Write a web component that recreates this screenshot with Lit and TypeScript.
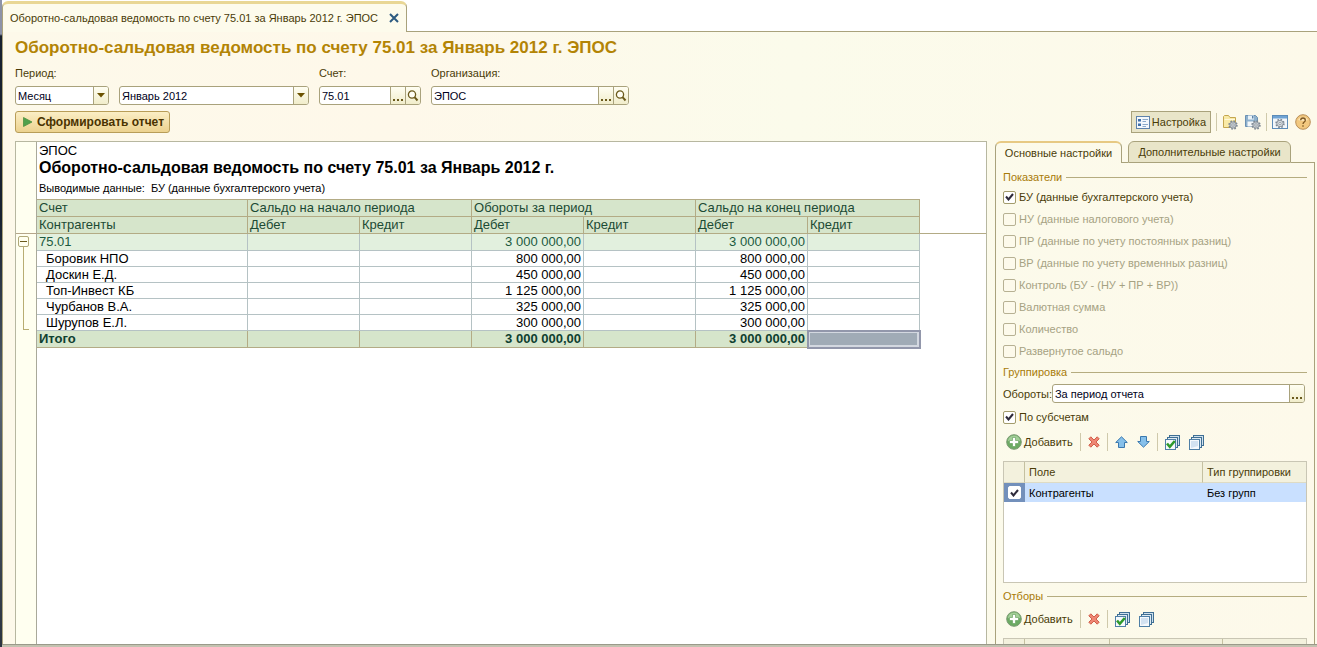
import { LitElement, html, css, svg, nothing } from "lit";
import { customElement } from "lit/decorators.js";
import { classMap } from "lit/directives/class-map.js";

interface Row {
  name: string;
  kind: "group" | "item" | "total";
  turnover: string;
  closing: string;
}

const ROWS: Row[] = [
  { name: "75.01", kind: "group", turnover: "3 000 000,00", closing: "3 000 000,00" },
  { name: "Боровик НПО", kind: "item", turnover: "800 000,00", closing: "800 000,00" },
  { name: "Доскин Е.Д.", kind: "item", turnover: "450 000,00", closing: "450 000,00" },
  { name: "Топ-Инвест КБ", kind: "item", turnover: "1 125 000,00", closing: "1 125 000,00" },
  { name: "Чурбанов В.А.", kind: "item", turnover: "325 000,00", closing: "325 000,00" },
  { name: "Шурупов Е.Л.", kind: "item", turnover: "300 000,00", closing: "300 000,00" },
  { name: "Итого", kind: "total", turnover: "3 000 000,00", closing: "3 000 000,00" },
];

const INDICATORS = [
  { label: "БУ (данные бухгалтерского учета)", on: true },
  { label: "НУ (данные налогового учета)", on: false },
  { label: "ПР (данные по учету постоянных разниц)", on: false },
  { label: "ВР (данные по учету временных разниц)", on: false },
  { label: "Контроль (БУ - (НУ + ПР + ВР))", on: false },
  { label: "Валютная сумма", on: false },
  { label: "Количество", on: false },
  { label: "Развернутое сальдо", on: false },
];

const icon = (body: unknown, w = 16, h = 16) =>
  html`<svg class="icon" width=${w} height=${h} viewBox="0 0 ${w} ${h}" aria-hidden="true">${body}</svg>`;

const gear = (x: number, y: number, fill = "#c3c9ce") => svg`
  <g transform="translate(${x} ${y})">
    <circle r="3.8" fill="none" stroke="#7d8893" stroke-width="1.8" stroke-dasharray="1.6 1.38"></circle>
    <circle r="3.2" fill=${fill} stroke="#7d8893" stroke-width=".8"></circle>
    <circle r="1.2" fill="#f6f7f4" stroke="#7d8893" stroke-width=".7"></circle>
  </g>`;

const closeIcon = icon(svg`<path d="M1 1 9 9M9 1 1 9" stroke="#2c5a80" stroke-width="2"></path>`, 10, 10);
const arrowIcon = icon(svg`<path d="M0 0H8L4 4.500Z" fill="#6b5200"></path>`, 8, 5);
const lensIcon = icon(svg`
  <circle cx="5" cy="4.500" r="3.600" fill="#fffef4" stroke="#6b5a1c" stroke-width="1.300"></circle>
  <path d="M7.500 7.200 10.500 10.500" stroke="#6b5a1c" stroke-width="2"></path>`, 12, 12);
const dotsIcon = icon(svg`<path d="M0 0H2V2H0ZM4 0H6V2H4ZM8 0H10V2H8Z" fill="#6b5a1c"></path>`, 10, 2);
const playIcon = icon(svg`<path d="M.5.5 9 5 .5 9.500Z" fill="#4fa04b" stroke="#4d8f3f" stroke-width=".8"></path>`, 10, 10);
const listIcon = icon(svg`
  <rect x=".5" y=".5" width="13" height="12" fill="#f4f8fc" stroke="#5e82ab"></rect>
  <path d="M2 3H5V5.500H2ZM2 7.500H5V10H2Z" fill="#3f6fa8"></path>
  <path d="M6.500 3.500H12M6.500 5.500H10M6.500 8.500H12M6.500 10.500H10" stroke="#7f9fc4" stroke-width=".9"></path>`, 14, 13);
const folderIcon = icon(svg`
  <path d="M1.500 13.500V2.500L2.500 1.500H6.500L8 3.500H13.500V13.500Z" fill="#f9eaa6" stroke="#c4a650"></path>
  <path d="M2.500 5.500H13" stroke="#fff9dc"></path>
  ${gear(11, 11)}`);
const diskIcon = icon(svg`
  <path d="M.5 1.500H10.500L12.500 3.500V12.500H.5Z" fill="#8fb1cd" stroke="#6a90b2"></path>
  <path d="M3 1.500H9V5.500H3Z" fill="#eaf2f8"></path><path d="M7 2H8.500V4.500H7Z" fill="#5b83a8"></path>
  <path d="M2.500 7.500H10.500V12.500H2.500Z" fill="#f4f8fa"></path>
  ${gear(11, 11)}`);
const windowIcon = icon(svg`
  <rect x=".5" y="1.500" width="15" height="13" fill="#f2f6fa" stroke="#5d8cb8"></rect>
  <path d="M1 2H15V4.500H1Z" fill="#6fa3d4"></path>
  ${gear(8, 9.5, "#d5dade")}`);
const helpIcon = icon(svg`
  <circle cx="8" cy="8" r="7.300" fill="#f2c87f" stroke="#b98f58"></circle>
  <path d="M3 6A5.500 5 0 0 1 13 6Q8 8 3 6Z" fill="#fbe3b4"></path>
  <path d="M5.700 6.300Q5.700 4 8 4T10.300 6.200Q10.300 7.300 9.200 8T8 10M8 11.200V12.800" fill="none" stroke="#7b5520" stroke-width="1.300"></path>`);
const addIcon = icon(svg`
  <circle cx="8" cy="8" r="7.300" fill="#6cab63" stroke="#7c9a74"></circle>
  <path d="M2 7A6 5.500 0 0 1 14 7Q8 9 2 7Z" fill="#a3cf98"></path>
  <path d="M6.500 3.500H9.500V6.500H12.500V9.500H9.500V12.500H6.500V9.500H3.500V6.500H6.500Z" fill="#fff" stroke="#5f9a58" stroke-width=".6"></path>`);
const deleteIcon = icon(svg`
  <path d="M.8 2.800 2.800.8 6 4 9.200.8 11.200 2.800 8 6 11.200 9.200 9.200 11.200 6 8 2.800 11.200.8 9.200 4 6Z" fill="#ee8673" stroke="#cc5340" stroke-width=".9"></path>`, 12, 12);
const upIcon = icon(svg`<path d="M6.500.8 12.300 6.500H9.500V11.500H3.500V6.500H.7Z" fill="#86c0ea" stroke="#3a78ae"></path>`, 13, 12);
const downIcon = icon(svg`<path d="M6.500 11.200 12.300 5.500H9.500V.5H3.500V5.500H.7Z" fill="#86c0ea" stroke="#3a78ae"></path>`, 13, 12);
const stack = svg`
  <rect x="4.500" y=".5" width="10" height="10" fill="#cfe0ec" stroke="#3f6f94"></rect>
  <rect x="2.500" y="2.500" width="10" height="10" fill="#dfeaf2" stroke="#3f6f94"></rect>
  <rect x=".5" y="4.500" width="10" height="10" fill="#f6f9fc" stroke="#4f7fa6"></rect>`;
const stackIcon = icon(svg`${stack}<path d="M2 6H9V11L2 13Z" fill="#d3e2f1"></path>`, 15, 15);
const stackCheckIcon = icon(svg`${stack}<path d="M2 8.500 4.800 11.800 9.800 6" fill="none" stroke="#2f9a2c" stroke-width="2.600"></path>`, 15, 15);

@customElement("app-root")
export class AppRoot extends LitElement {
  static styles = css`
    :host {
      display: block;
      height: 100vh;
      overflow: hidden;
      font: 11px/14px "Liberation Sans", Arial, sans-serif;
      color: #4a3c08;
    }
    * { box-sizing: border-box; }
    button, input, select { font: inherit; color: inherit; margin: 0; }
    button { padding: 0; border: 0; background: none; display: inline-flex; align-items: center; justify-content: center; }
    .icon { display: block; flex: none; }

    .frame {
      height: 100%;
      display: flex;
      flex-direction: column;
      padding-left: 2px;
      background: linear-gradient(#8d93a8 0, #8d93a8 34px, #17212f 36px, #17212f 220px, #55606e 400px, #2c3440 640px);
    }
    .tabbar { display: flex; height: 32px; background: #fff; flex: none; }
    .tab {
      display: flex;
      align-items: center;
      gap: 11px;
      margin-top: 1px;
      padding: 0 7px;
      background: #fdfbec;
      border: 1px solid #a9a27c;
      border-top: 3px solid #e9d795;
      border-bottom: 0;
      border-radius: 6px 6px 0 0;
      white-space: nowrap;
    }
    .tabrest { flex: 1; border-bottom: 1px solid #a9a27c; }
    .body {
      flex: 1;
      min-height: 0;
      display: flex;
      flex-direction: column;
      border-left: 1px solid #a9a27c;
      padding: 7px 2px 0 12px;
      background: linear-gradient(90deg, #fdf9ea, #fef8ea 30%, #fbfbeb 60%, #fdf9ea);
    }
    .status { flex: none; height: 3px; background: #c3c2b0; border-top: 1px solid #9a9a8a; }
    h1 { margin: 0; font-size: 17px; line-height: 18px; color: #b38405; white-space: nowrap; }

    .params { display: flex; gap: 10px; margin-top: 9px; }
    .param { display: flex; flex-direction: column; gap: 6px; }
    .field {
      display: flex;
      height: 19px;
      border: 1px solid #a9a27c;
      border-radius: 3px;
      background: #fff;
      overflow: hidden;
      color: #000020;
    }
    .combo { display: grid; }
    .combo select, .combo .drop { grid-area: 1 / 1; }
    .combo select { appearance: none; border: 0; background: none; padding: 0 17px 0 2px; width: 100%; }
    .drop {
      justify-self: end;
      width: 15px;
      display: flex;
      align-items: center;
      justify-content: center;
      pointer-events: none;
    }
    .drop, .field button { background: linear-gradient(#fffef2, #f1edcb); border-left: 1px solid #a9a27c; }
    .field input { flex: 1; min-width: 0; border: 0; padding: 0 2px; background: none; }
    .field button { width: 15px; flex: none; }
    .field button.dots { align-items: flex-end; padding-bottom: 3px; }
    .w-month { width: 94px; }
    .w-period { width: 190px; }
    .w-account { width: 102px; }
    .w-org { width: 198px; }

    .commands { display: flex; justify-content: space-between; align-items: center; margin-top: 6px; height: 22px; }
    .run {
      gap: 4px;
      height: 22px;
      padding: 0 5px 0 7px;
      border: 1px solid #b89d58;
      border-radius: 3px;
      background: linear-gradient(#fbeec5, #ecd28f);
      font-weight: bold;
      font-size: 12px;
      color: #4a3200;
    }
    .tools { display: flex; align-items: center; gap: 7px; padding-right: 4px; }
    .toggle { gap: 2px; height: 22px; padding: 0 4px; border: 1px solid #a9a27c; background: #e9e5c9; }
    .sep { width: 1px; height: 18px; background: #cfc9ab; }
    .tools .sep { margin: 0 -2px; }

    .work { flex: 1; min-height: 0; display: flex; gap: 8px; margin-top: 8px; }
    .report { flex: 1; min-width: 0; display: flex; border: 1px solid #b7b7a0; border-bottom: 0; background: #fff; overflow: hidden; }
    .gutter { flex: none; width: 21px; background: #fffff0; border-right: 1px solid #a9a99a; }
    .gutter-head { height: 92px; border-bottom: 1px solid #b5a68a; }
    .tree { display: flex; flex-direction: column; margin: 2px 0 0 2px; width: 11px; }
    .tree button { width: 11px; height: 11px; border: 1px solid #b0a878; border-radius: 2px; background: #fffff0; }
    .branch { height: 83px; margin-left: 5px; border-left: 1px solid #b8ad72; border-bottom: 1px solid #b8ad72; }

    .sheet { flex: 1; min-width: 0; color: #000; }
    .sheet p { margin: 0; padding-left: 2px; white-space: pre; }
    .org { font-size: 13px; line-height: 17px; }
    .name { font-size: 16px; line-height: 18px; font-weight: bold; }
    .data { font-size: 11px; line-height: 22px; }
    .ledger { width: 100%; table-layout: fixed; border-collapse: separate; border-spacing: 0; }
    .ledger th, .ledger td {
      height: 16px;
      padding: 0 2px;
      border: 0 solid #b5c2c4;
      border-width: 0 1px 1px 0;
      font-size: 13px;
      line-height: 15px;
      font-weight: normal;
      text-align: left;
      white-space: nowrap;
    }
    .ledger th { border-color: #b3ab85; background: #d6e5cb; color: #1c4a34; height: 17px; line-height: 16px; }
    .ledger thead tr:first-child th { border-top: 1px solid #b3ab85; height: 18px; }
    .ledger .num { text-align: right; }
    .ledger .group td { background: #e2f0de; color: #1c5a40; height: 17px; line-height: 16px; }
    .ledger .item td:first-child { padding-left: 9px; }
    .ledger .total td { background: #d6e5cb; color: #0f4030; font-weight: bold; height: 17px; line-height: 16px; border-color: #b3ab85; }
    .ledger thead tr:first-child th.rest { background: none; border: 0; }
    .ledger th.rest { background: none; border-right: 0; }
    .ledger tbody td.rest { background: none; border: 0; }
    .ledger .total td.cursor { background: #a0abb6; outline: 2px solid #9297ab; outline-offset: -1px; box-shadow: inset 0 0 0 2px #d3d8e0; }
    .c-name { width: 211px; }
    .c-num { width: 112px; }

    .settings { flex: none; width: 320px; display: flex; flex-direction: column; }
    .tabs { display: flex; height: 22px; flex: none; }
    .tabs button { border: 1px solid #a9a27c; border-radius: 6px 6px 0 0; padding: 0 7px; white-space: nowrap; }
    .tabs .active { border-top: 2px solid #e7c983; border-bottom: 0; width: 127px; }
    .tabs .other { background: #e9e5c9; width: 163px; }
    .tabs i { border-bottom: 1px solid #a9a27c; }
    .tabs .gap { width: 6px; }
    .tabs .fill { flex: 1; }
    .panel { flex: 1; min-height: 0; overflow: hidden; border: 1px solid #a9a27c; border-width: 0 1px; padding: 7px 7px 0; }
    .legend { display: flex; align-items: center; gap: 4px; color: #a87b08; height: 14px; }
    .legend::after { content: ""; flex: 1; height: 1px; background: #b5ac80; }
    .checks { display: flex; flex-direction: column; margin-bottom: 3px; padding-top: 2px; }
    .check { display: flex; align-items: center; gap: 3px; height: 22px; }
    .check.off { color: #a6a283; }
    .box { display: grid; place-items: center; }
    .box > * { grid-area: 1 / 1; }
    .box input { appearance: none; width: 13px; height: 13px; border: 1px solid #a39c6c; border-radius: 2px; background: #fff; }
    .off .box input { background: #fdfaeb; border-color: #b7b193; }
    .box svg { pointer-events: none; z-index: 1; }
    .line { display: flex; align-items: center; margin: 5px 2px 3px 0; }
    .line .field { flex: 1; }
    .bar { display: flex; align-items: center; height: 20px; gap: 7px; padding-left: 3px; margin: 4px 0 9px; }
    .legend + .bar { margin-top: 6px; }
    .bar .add { gap: 2px; }
    .bar .pair { display: flex; gap: 9px; }
    .listbox { height: 122px; border: 1px solid #c9c6b4; background: #fff; margin-bottom: 6px; }
    .list { width: 100%; table-layout: fixed; border-collapse: separate; border-spacing: 0; }
    .list th { height: 21px; padding: 0 4px; text-align: left; font-weight: normal; background: #f3f1dd; border-right: 1px solid #c4c0a0; border-bottom: 1px solid #dedbc4; white-space: nowrap; }
    .list th:last-child { border-right: 0; }
    .list td { height: 19px; padding: 0 4px; background: #c9e0ff; color: #000; white-space: nowrap; }
    .list td:first-child { background: #7390bb; }
    .list td .box input { border-color: #fff; }
    .l-mark { width: 21px; }
    .l-type { width: 103px; }
    .f-a { width: 85px; }
    .f-b { width: 113px; }
  `;

  private tick(label: string, on: boolean, off = false, bare = false) {
    const box = html`<span class="box">
      <input type="checkbox" .checked=${on} ?disabled=${off} aria-label=${bare ? label : nothing} />
      ${on ? icon(svg`<path d="M1 3.500 3.500 6.500 8 1" fill="none" stroke="#2e2a3a" stroke-width="2"></path>`, 9, 8) : nothing}
    </span>`;
    return bare ? box : html`<label class=${classMap({ check: true, off })}>${box}${label}</label>`;
  }

  private row(r: Row) {
    return html`<tr class=${r.kind}>
      <td>${r.name}</td><td></td><td></td>
      <td class="num">${r.turnover}</td><td></td>
      <td class="num">${r.closing}</td>
      <td class=${classMap({ cursor: r.kind === "total" })}></td>
      <td class="rest"></td>
    </tr>`;
  }

  render() {
    return html`<div class="frame">
      <div class="tabbar">
        <div class="tab">
          <span>Оборотно-сальдовая ведомость по счету 75.01 за Январь 2012 г. ЭПОС</span>
          <button aria-label="Закрыть">${closeIcon}</button>
        </div>
        <div class="tabrest"></div>
      </div>
      <main class="body">
        <h1>Оборотно-сальдовая ведомость по счету 75.01 за Январь 2012 г. ЭПОС</h1>
        <div class="params">
          <div class="param w-month">
            <label for="kind">Период:</label>
            <div class="field combo"><select id="kind"><option>Месяц</option></select><span class="drop">${arrowIcon}</span></div>
          </div>
          <div class="param w-period">
            <label for="period">&nbsp;</label>
            <div class="field combo"><select id="period" aria-label="Месяц периода"><option>Январь 2012</option></select><span class="drop">${arrowIcon}</span></div>
          </div>
          <div class="param w-account">
            <label for="account">Счет:</label>
            <div class="field"><input id="account" value="75.01" />
              <button class="dots" aria-label="Выбрать счет">${dotsIcon}</button>
              <button aria-label="Открыть счет">${lensIcon}</button></div>
          </div>
          <div class="param w-org">
            <label for="org">Организация:</label>
            <div class="field"><input id="org" value="ЭПОС" />
              <button class="dots" aria-label="Выбрать организацию">${dotsIcon}</button>
              <button aria-label="Открыть организацию">${lensIcon}</button></div>
          </div>
        </div>
        <div class="commands">
          <button class="run">${playIcon}Сформировать отчет</button>
          <div class="tools">
            <button class="toggle">${listIcon}Настройка</button>
            <i class="sep"></i>
            <button aria-label="Открыть настройки">${folderIcon}</button>
            <button aria-label="Сохранить настройки">${diskIcon}</button>
            <i class="sep"></i>
            <button aria-label="Вид">${windowIcon}</button>
            <button aria-label="Справка">${helpIcon}</button>
          </div>
        </div>
        <div class="work">
          <section class="report">
            <div class="gutter">
              <div class="gutter-head"></div>
              <div class="tree">
                <button aria-label="Свернуть">${icon(svg`<path d="M0 .5H7" stroke="#6b5a1c"></path>`, 7, 1)}</button>
                <div class="branch"></div>
              </div>
            </div>
            <div class="sheet">
              <p class="org">ЭПОС</p>
              <p class="name">Оборотно-сальдовая ведомость по счету 75.01 за Январь 2012 г.</p>
              <p class="data">Выводимые данные:  БУ (данные бухгалтерского учета)</p>
              <table class="ledger">
                <colgroup>
                  <col class="c-name" />
                  ${[1, 2, 3, 4, 5, 6].map(() => html`<col class="c-num" />`)}
                  <col />
                </colgroup>
                <thead>
                  <tr>
                    <th>Счет</th>
                    <th colspan="2">Сальдо на начало периода</th>
                    <th colspan="2">Обороты за период</th>
                    <th colspan="2">Сальдо на конец периода</th>
                    <th class="rest"></th>
                  </tr>
                  <tr>
                    <th>Контрагенты</th>
                    <th>Дебет</th><th>Кредит</th>
                    <th>Дебет</th><th>Кредит</th>
                    <th>Дебет</th><th>Кредит</th>
                    <th class="rest"></th>
                  </tr>
                </thead>
                <tbody>${ROWS.map((r) => this.row(r))}</tbody>
              </table>
            </div>
          </section>
          <aside class="settings">
            <div class="tabs">
              <button class="active">Основные настройки</button><i class="gap"></i>
              <button class="other">Дополнительные настройки</button><i class="fill"></i>
            </div>
            <div class="panel">
              <div class="legend">Показатели</div>
              <div class="checks">${INDICATORS.map((c) => this.tick(c.label, c.on, !c.on))}</div>
              <div class="legend">Группировка</div>
              <div class="line">
                <label for="turns">Обороты:</label>
                <div class="field"><input id="turns" value="За период отчета" />
                  <button class="dots" aria-label="Выбрать период">${dotsIcon}</button></div>
              </div>
              ${this.tick("По субсчетам", true)}
              <div class="bar">
                <button class="add">${addIcon}Добавить</button>
                <i class="sep"></i>
                <button aria-label="Удалить">${deleteIcon}</button>
                <i class="sep"></i>
                <span class="pair">
                  <button aria-label="Вверх">${upIcon}</button>
                  <button aria-label="Вниз">${downIcon}</button>
                </span>
                <i class="sep"></i>
                <span class="pair">
                  <button aria-label="Отметить все">${stackCheckIcon}</button>
                  <button aria-label="Снять отметки">${stackIcon}</button>
                </span>
              </div>
              <div class="listbox">
                <table class="list">
                  <colgroup><col class="l-mark" /><col /><col class="l-type" /></colgroup>
                  <thead><tr><th></th><th>Поле</th><th>Тип группировки</th></tr></thead>
                  <tbody><tr><td>${this.tick("Контрагенты", true, false, true)}</td><td>Контрагенты</td><td>Без групп</td></tr></tbody>
                </table>
              </div>
              <div class="legend">Отборы</div>
              <div class="bar">
                <button class="add">${addIcon}Добавить</button>
                <i class="sep"></i>
                <button aria-label="Удалить">${deleteIcon}</button>
                <i class="sep"></i>
                <span class="pair">
                  <button aria-label="Отметить все">${stackCheckIcon}</button>
                  <button aria-label="Снять отметки">${stackIcon}</button>
                </span>
              </div>
              <div class="listbox">
                <table class="list">
                  <colgroup><col class="l-mark" /><col class="f-a" /><col class="f-b" /><col /></colgroup>
                  <thead><tr><th></th><th></th><th></th><th></th></tr></thead>
                </table>
              </div>
            </div>
          </aside>
        </div>
      </main>
      <div class="status"></div>
    </div>`;
  }
}
